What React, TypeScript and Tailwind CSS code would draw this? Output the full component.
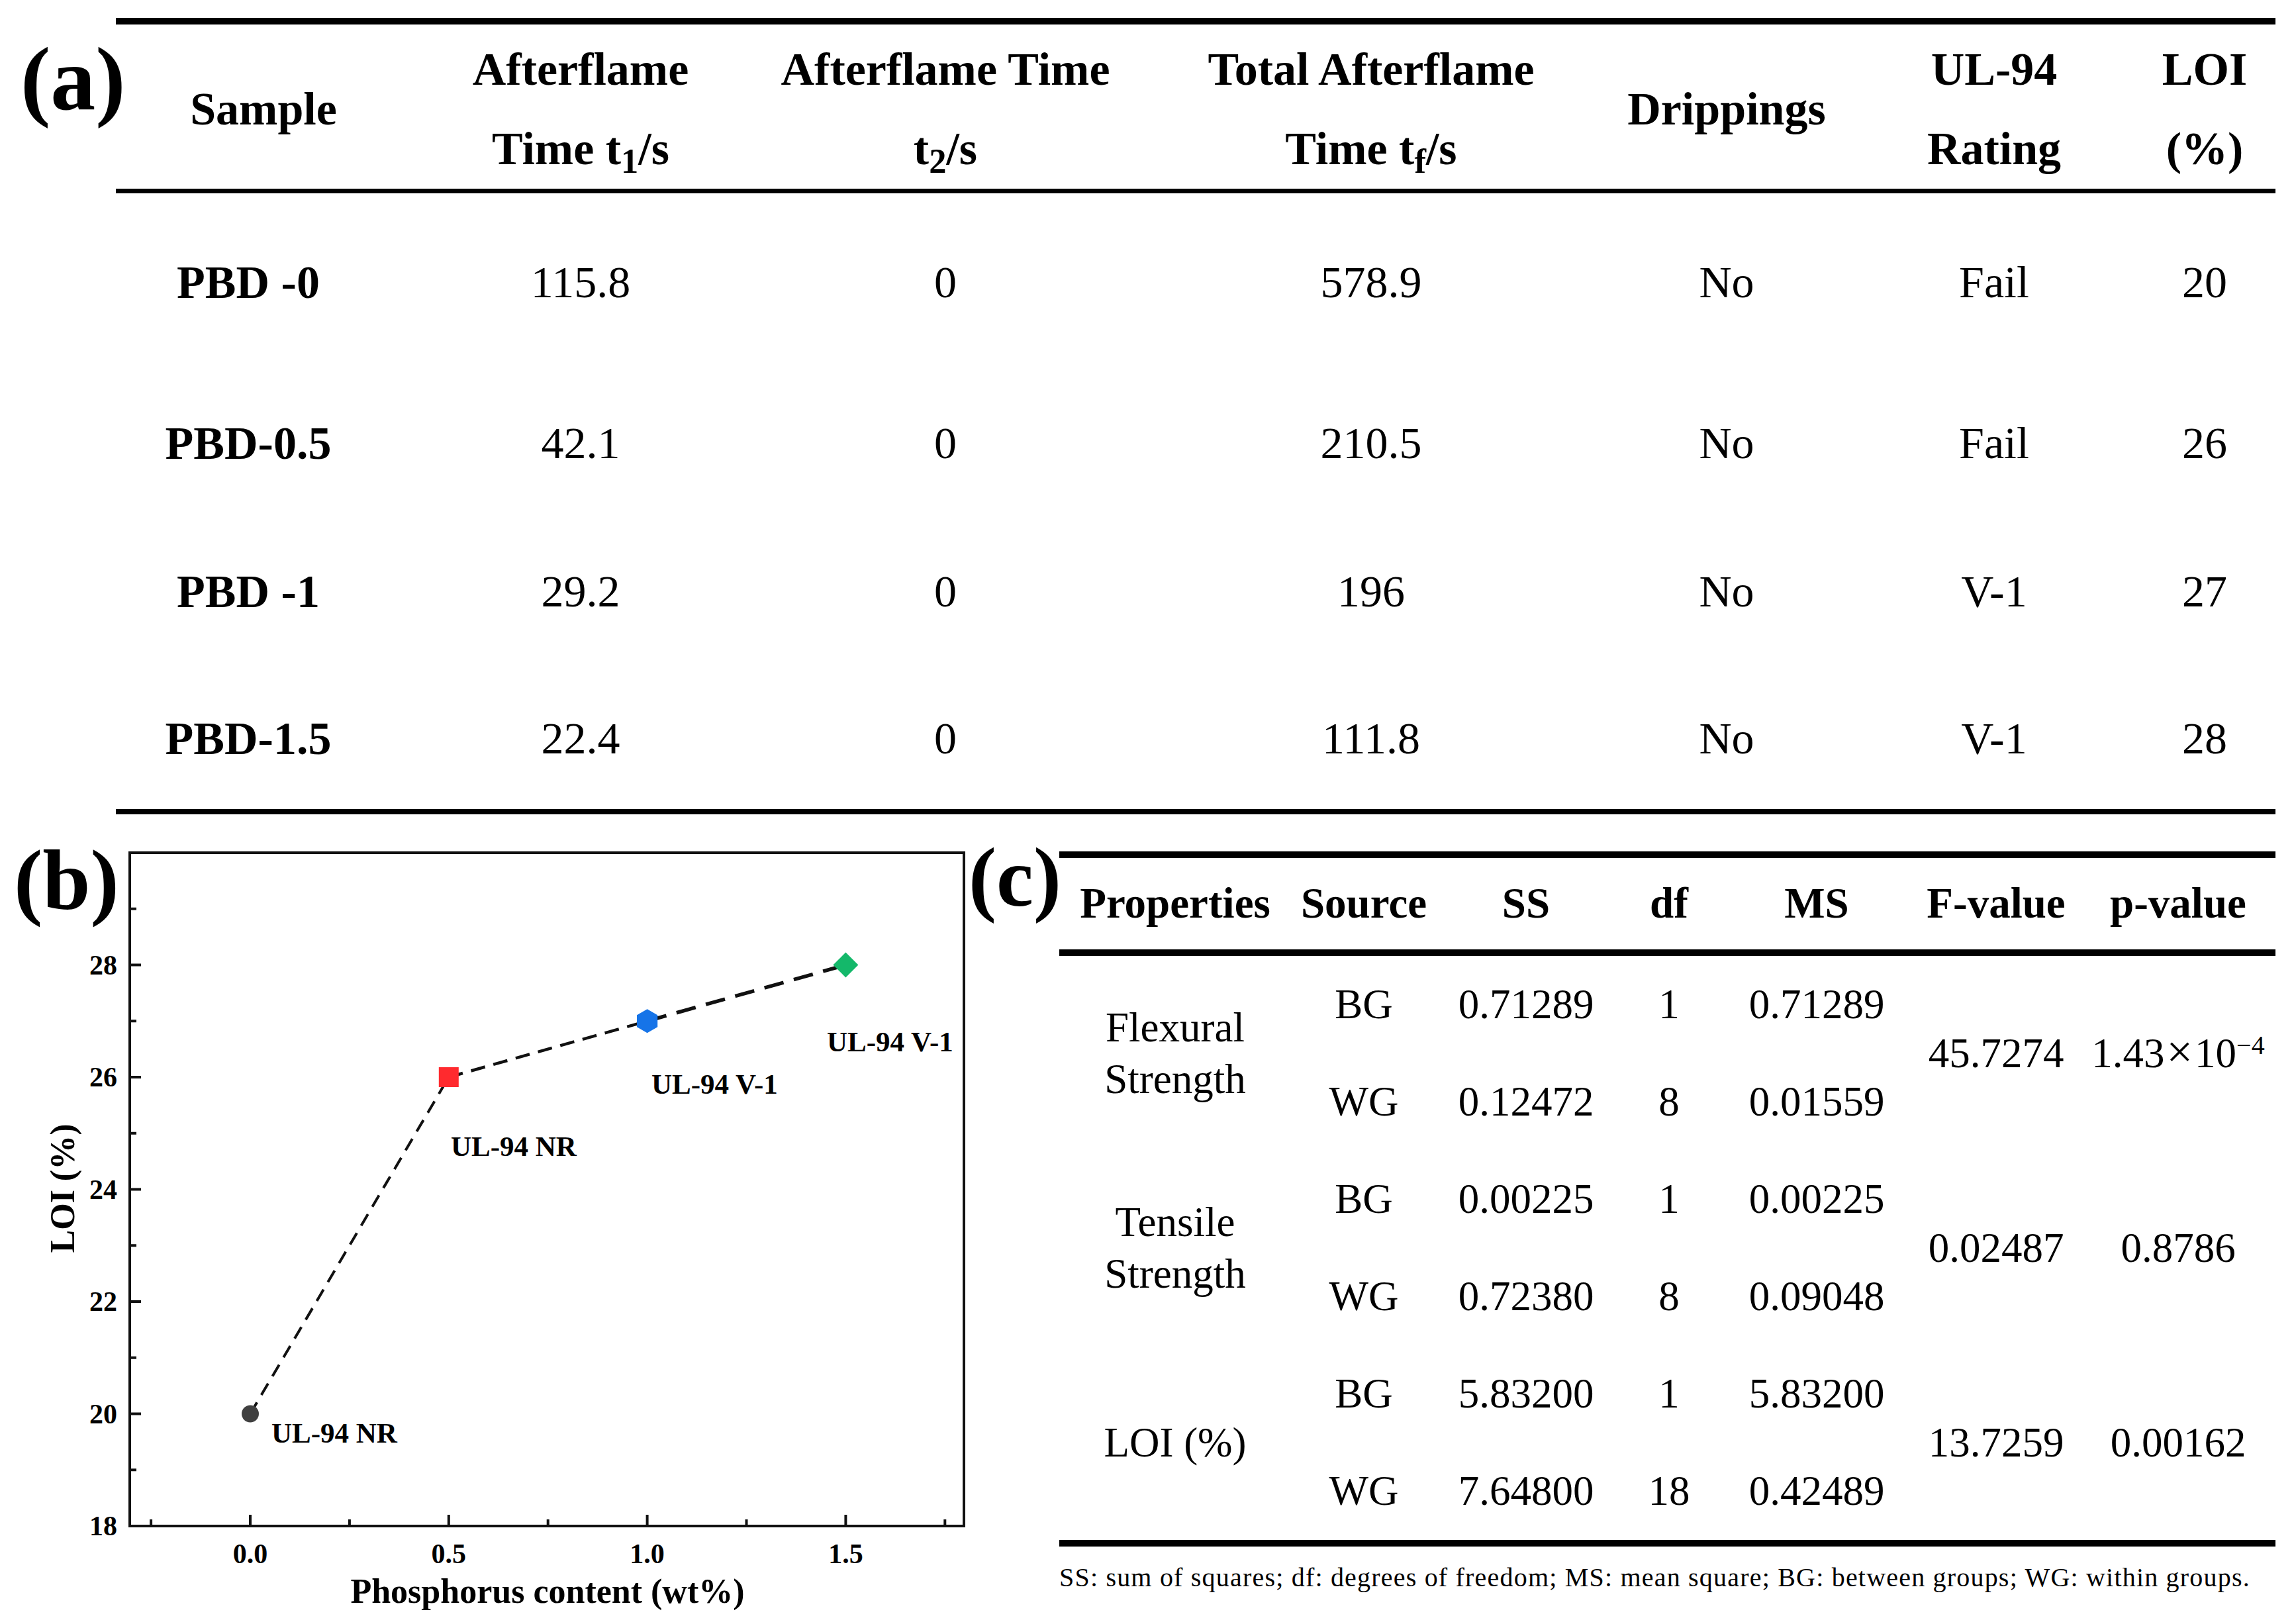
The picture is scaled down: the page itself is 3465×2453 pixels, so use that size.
import React from "react";

type RowA = { cells: string[]; h: string };

const rowsA: RowA[] = [
  { cells: ["PBD -0", "115.8", "0", "578.9", "No", "Fail", "20"], h: "h-[268px]" },
  { cells: ["PBD-0.5", "42.1", "0", "210.5", "No", "Fail", "26"], h: "h-[218px]" },
  { cells: ["PBD -1", "29.2", "0", "196", "No", "V-1", "27"], h: "h-[230px]" },
  { cells: ["PBD-1.5", "22.4", "0", "111.8", "No", "V-1", "28"], h: "h-[214px]" },
];

const groups = [
  {
    prop: ["Flexural", "Strength"],
    bg: ["BG", "0.71289", "1", "0.71289"],
    wg: ["WG", "0.12472", "8", "0.01559"],
    f: "45.7274",
    p: (
      <span className="whitespace-nowrap">
        1.43<span className="mx-[3px] text-[70px] leading-none">×</span>10<sup className="text-[40px]">−4</sup>
      </span>
    ),
  },
  {
    prop: ["Tensile", "Strength"],
    bg: ["BG", "0.00225", "1", "0.00225"],
    wg: ["WG", "0.72380", "8", "0.09048"],
    f: "0.02487",
    p: <span>0.8786</span>,
  },
  {
    prop: ["LOI (%)"],
    bg: ["BG", "5.83200", "1", "5.83200"],
    wg: ["WG", "7.64800", "18", "0.42489"],
    f: "13.7259",
    p: <span>0.00162</span>,
  },
];

function HeadA({ lines }: { lines: React.ReactNode[] }) {
  return (
    <div className="flex flex-col items-center justify-center h-full whitespace-nowrap">
      {lines.map((l, i) => (
        <div key={i}>{l}</div>
      ))}
    </div>
  );
}

// LOI chart, coordinates in page pixels (y shifted by 1232)
const X = (v: number) => 378 + v * 599.6;
const Y = (v: number) => 1075 - (v - 18) * 84.75;

function Chart() {
  const pts = [
    [0, 20],
    [0.5, 26],
    [1.0, 27],
    [1.5, 28],
  ].map(([a, b]) => [X(a), Y(b)]);
  const hex = (cx: number, cy: number, r: number) =>
    Array.from({ length: 6 }, (_, k) => {
      const a = ((90 + 60 * k) * Math.PI) / 180;
      return `${cx + r * Math.cos(a)},${cy - r * Math.sin(a)}`;
    }).join(" ");
  const [p0, p1, p2, p3] = pts;
  return (
    <svg width="1460" height="1221" viewBox="0 0 1460 1221" className="block">
      <rect x="196" y="58" width="1260" height="1017" fill="none" stroke="#111" strokeWidth="4" />
      {[18, 20, 22, 24, 26, 28].map((v) => (
        <g key={v}>
          <line x1="196" x2="213" y1={Y(v)} y2={Y(v)} stroke="#111" strokeWidth="4" />
          <text x="177" y={Y(v) + 14} textAnchor="end" fontSize="42" fontWeight="bold">
            {v}
          </text>
        </g>
      ))}
      {[19, 21, 23, 25, 27, 29].map((v) => (
        <line key={v} x1="196" x2="206" y1={Y(v)} y2={Y(v)} stroke="#111" strokeWidth="4" />
      ))}
      {[0, 0.5, 1.0, 1.5].map((v) => (
        <g key={v}>
          <line x1={X(v)} x2={X(v)} y1="1075" y2="1058" stroke="#111" strokeWidth="4" />
          <text x={X(v)} y="1131" textAnchor="middle" fontSize="42" fontWeight="bold">
            {v.toFixed(1)}
          </text>
        </g>
      ))}
      {[-0.25, 0.25, 0.75, 1.25, 1.75].map((v) => (
        <line key={v} x1={X(v)} x2={X(v)} y1="1075" y2="1065" stroke="#111" strokeWidth="4" />
      ))}
      <text x="827" y="1191" textAnchor="middle" fontSize="52" fontWeight="bold">
        Phosphorus content (wt%)
      </text>
      <text transform="translate(112,565) rotate(-90)" textAnchor="middle" fontSize="52" fontWeight="bold">
        LOI (%)
      </text>
      <line x1={p0[0]} y1={p0[1]} x2={p1[0]} y2={p1[1]} stroke="#111" strokeWidth="4" strokeDasharray="20 13" />
      <line x1={p1[0]} y1={p1[1]} x2={p2[0]} y2={p2[1]} stroke="#111" strokeWidth="4.5" strokeDasharray="22 13" />
      <line x1={p2[0]} y1={p2[1]} x2={p3[0]} y2={p3[1]} stroke="#111" strokeWidth="5.5" strokeDasharray="30 16" />
      <circle cx={p0[0]} cy={p0[1]} r="13" fill="#404040" />
      <rect x={p1[0] - 15} y={p1[1] - 15} width="30" height="30" fill="#ff2a2e" />
      <polygon points={hex(p2[0], p2[1], 18)} fill="#1674e8" />
      <polygon
        points={`${p3[0]},${p3[1] - 19} ${p3[0] + 19},${p3[1]} ${p3[0]},${p3[1] + 19} ${p3[0] - 19},${p3[1]}`}
        fill="#14b86a"
      />
      <g fontSize="43" fontWeight="bold">
        <text x="410" y="949">UL-94 NR</text>
        <text x="681" y="516">UL-94 NR</text>
        <text x="984" y="422">UL-94 V-1</text>
        <text x="1249" y="358">UL-94 V-1</text>
      </g>
    </svg>
  );
}

export default function App() {
  return (
    <div className="w-[3465px] h-[2453px] bg-white text-black overflow-hidden font-['Liberation_Serif','Times_New_Roman',serif]">
      {/* (a) UL-94 / LOI table */}
      <section className="flex pt-[27px]">
        <div className="w-[175px] pl-[31px] pt-[24px] text-[136px] font-bold leading-none">(a)</div>
        <div className="w-[3262px]">
          <div className="grid grid-cols-[400px_604px_498px_788px_286px_522px_114px] border-t-[10px] border-b-[7px] border-black pt-[8px] h-[265px] text-[70px] font-bold leading-[120px]">
            <div className="pl-[46px]">
              <HeadA lines={["Sample"]} />
            </div>
            <HeadA lines={["Afterflame", <>Time t<sub>1</sub>/s</>]} />
            <HeadA lines={["Afterflame Time", <>t<sub>2</sub>/s</>]} />
            <HeadA lines={["Total Afterflame", <>Time t<sub>f</sub>/s</>]} />
            <HeadA lines={["Drippings"]} />
            <HeadA lines={["UL-94", "Rating"]} />
            <HeadA lines={["LOI", "(%)"]} />
          </div>
          {rowsA.map((r) => (
            <div
              key={r.cells[0]}
              className={`grid grid-cols-[400px_604px_498px_788px_286px_522px_114px] items-center text-[68px] ${r.h}`}
            >
              {r.cells.map((c, i) => (
                <div
                  key={i}
                  className={`flex justify-center whitespace-nowrap ${i === 0 ? "font-bold text-[70px]" : ""}`}
                >
                  {c}
                </div>
              ))}
            </div>
          ))}
          <div className="border-t-[8px] border-black" />
        </div>
      </section>

      <section className="flex">
        {/* (b) LOI vs phosphorus content */}
        <div className="relative w-[1460px] h-[1221px]">
          <Chart />
          <div className="absolute left-[21px] top-[34px] text-[130px] font-bold leading-none">(b)</div>
        </div>

        {/* (c) ANOVA table */}
        <div className="w-[140px] pl-[3px] pt-[33px] text-[126px] font-bold leading-none">(c)</div>
        <div className="w-[1837px] pt-[56px]">
          <div className="grid grid-cols-[350px_220px_270px_162px_284px_258px_292px] items-center h-[158px] border-t-[10px] border-b-[10px] border-black text-[65px] font-bold">
            {["Properties", "Source", "SS", "df", "MS", "F-value", "p-value"].map((h) => (
              <div key={h} className="flex justify-center whitespace-nowrap">
                {h}
              </div>
            ))}
          </div>
          <div className="grid grid-cols-[350px_220px_270px_162px_284px_258px_292px] grid-rows-[repeat(6,147px)] border-b-[10px] border-black text-[63px]">
            {groups.map((g) => (
              <React.Fragment key={g.f}>
                <div className="row-span-2 flex flex-col items-center justify-center leading-[78px]">
                  {g.prop.map((l) => (
                    <div key={l} className="whitespace-nowrap">{l}</div>
                  ))}
                </div>
                {g.bg.map((c, i) => (
                  <div key={"b" + i} className="flex items-center justify-center">
                    {c}
                  </div>
                ))}
                <div className="row-span-2 flex items-center justify-center">{g.f}</div>
                <div className="row-span-2 flex items-center justify-center">{g.p}</div>
                {g.wg.map((c, i) => (
                  <div key={"w" + i} className="flex items-center justify-center">
                    {c}
                  </div>
                ))}
              </React.Fragment>
            ))}
          </div>
          <p className="mt-[23px] text-[40px] leading-[48px] tracking-[1.2px] whitespace-nowrap">
            SS: sum of squares; df: degrees of freedom; MS: mean square; BG: between groups; WG: within groups.
          </p>
        </div>
      </section>
    </div>
  );
}
